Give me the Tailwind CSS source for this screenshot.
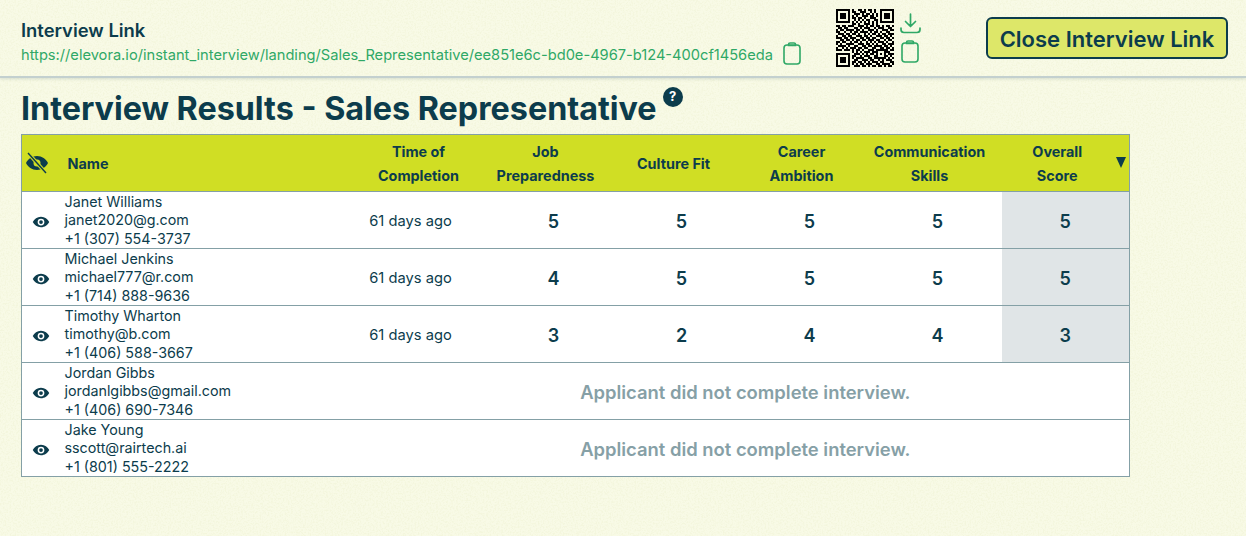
<!DOCTYPE html>
<html lang="en">
<head>
<meta charset="utf-8">
<title>Interview Results</title>
<script src="https://cdn.jsdelivr.net/npm/@tailwindcss/browser@4"></script>
</head>
<body class="relative h-[536px] w-[1246px] overflow-hidden bg-[#f8fae6] font-['Inter','Liberation_Sans',sans-serif] text-[#0c3c4c]">
<svg class="absolute inset-0 h-full w-full" aria-hidden="true"><filter id="n"><feTurbulence type="fractalNoise" baseFrequency="0.6" numOctaves="3" seed="4"/><feColorMatrix values="0 0 0 0 0.90  0 0 0 0 0.92  0 0 0 0 0.72  3.2 0 0 0 -1.35"/></filter><rect width="100%" height="100%" filter="url(#n)"/></svg>

<div class="relative">
<header class="flex h-[78px] items-center border-b-2 border-[#c3d0cf] pl-[21px] shadow-[0_1px_3px_rgba(12,60,76,0.15)]">
  <div class="mt-[7px] w-[815px] shrink-0">
    <div class="text-[18.4px] leading-6 font-semibold">Interview Link</div>
    <div class="mt-[3px] flex items-center gap-[10px]">
      <span class="text-[14.65px] leading-5 text-[#2fa866]">https://elevora.io/instant_interview/landing/Sales_Representative/ee851e6c-bd0e-4967-b124-400cf1456eda</span>
      <svg class="-mt-[4px] h-[23px] w-[18px]" viewBox="0 0 18 23" fill="none" stroke="#2fa866" stroke-width="1.6"><rect x="1" y="3" width="16" height="19" rx="3"/><path d="M5.5 3.5V2.5a1.5 1.5 0 0 1 1.5-1.5h4a1.5 1.5 0 0 1 1.5 1.5v1z"/></svg>
    </div>
  </div>
  <svg id="qr" class="h-[58px] w-[58px] shrink-0" viewBox="0 0 29 29" shape-rendering="crispEdges"></svg>
  <div class="ml-[5px] flex w-[22px] shrink-0 flex-col items-center gap-[6px]">
    <svg class="h-[21px] w-[21px]" viewBox="0 0 21 21" fill="none" stroke="#2fa866" stroke-width="1.7" stroke-linecap="round" stroke-linejoin="round"><path d="M10.5 1v12M5.5 8.5l5 5 5-5M1 15v1.5a3 3 0 0 0 3 3h13a3 3 0 0 0 3-3V15"/></svg>
    <svg class="h-[23px] w-[18px]" viewBox="0 0 18 23" fill="none" stroke="#2fa866" stroke-width="1.6"><rect x="1" y="3" width="16" height="19" rx="3"/><path d="M5.5 3.5V2.5a1.5 1.5 0 0 1 1.5-1.5h4a1.5 1.5 0 0 1 1.5 1.5v1z"/></svg>
  </div>
  <button class="ml-[65px] flex h-[42px] w-[242px] items-center justify-center rounded-md border-2 border-[#0c3c4c] bg-[#dde769] pt-[3px] text-[22px] font-semibold">Close Interview Link</button>
</header>

<main class="pl-[21px]">
  <div class="flex h-[56px] items-start">
    <h1 class="mt-[11px] text-[32.3px] leading-10 font-bold">Interview Results - Sales Representative</h1>
    <span class="mt-[9px] ml-[6px] flex h-5 w-5 items-center justify-center rounded-full bg-[#0c3c4c] text-[13px] font-bold text-white">?</span>
  </div>
  <table class="w-[1108px] table-fixed border-collapse border border-[#84a0a6] bg-white">
    <colgroup><col class="w-[39px]"><col class="w-[301px]"><col class="w-[128px]"><col class="w-[128px]"><col class="w-[128px]"><col class="w-[128px]"><col class="w-[128px]"><col class="w-[128px]"></colgroup>
    <thead>
      <tr class="h-[57px] bg-[#d0de24] text-[14.4px] leading-6 font-semibold">
        <th class="p-0 pb-[1px]"><svg class="ml-[3px] block h-[24px] w-[24px]" viewBox="0 0 24 24" fill="#0c3c4c"><path d="M12 5c5 0 9 3 11 7-2 4-6 7-11 7S3 16 1 12c2-4 6-7 11-7zm0 3.5a3.5 3.5 0 1 0 0 7 3.5 3.5 0 0 0 0-7z"/><path d="M3 2l18 20" stroke="#d0de24" stroke-width="3.5"/><path d="M3 2l18 20" stroke="#0c3c4c" stroke-width="1.4"/></svg></th>
        <th class="p-0 pt-[2px] pl-[7px] text-left">Name</th>
        <th class="p-0 pt-[2px] pr-[14px]">Time of<br>Completion</th>
        <th class="p-0 pt-[2px] pr-[16px]">Job<br>Preparedness</th>
        <th class="p-0 pt-[2px] pr-[16px]">Culture Fit</th>
        <th class="p-0 pt-[2px] pr-[16px]">Career<br>Ambition</th>
        <th class="p-0 pt-[2px] pr-[16px]">Communication<br>Skills</th>
        <th class="relative p-0 pt-[2px] pr-[16px]">Overall<br>Score<span class="absolute top-[22px] right-[3px] h-0 w-0 border-x-[5.5px] border-t-[11px] border-x-transparent border-t-[#0c3c4c]"></span></th>
      </tr>
    </thead>
    <tbody class="text-[14.3px] leading-[18.2px]">
      <tr class="h-[57px] border-t border-[#84a0a6]">
        <td class="p-0 pt-[4px]"><svg class="ml-[10px] block h-[18px] w-[18px]" viewBox="0 0 24 24" fill="#0c3c4c"><path d="M12 5c5 0 9 3 11 7-2 4-6 7-11 7S3 16 1 12c2-4 6-7 11-7zm0 2.5a4.5 4.5 0 1 0 0 9 4.5 4.5 0 0 0 0-9zm0 2a2.5 2.5 0 1 1 0 5 2.5 2.5 0 0 1 0-5z"/></svg></td>
        <td class="p-0 pt-[1px] pl-[4px]">Janet Williams<br>janet2020@g.com<br>+1 (307) 554-3737</td>
        <td class="p-0 pt-[2px] pr-[30px] text-center text-[14.7px]">61 days ago</td>
        <td class="p-0 pt-[4px] text-center text-[18px] font-semibold">5</td><td class="p-0 pt-[4px] text-center text-[18px] font-semibold">5</td><td class="p-0 pt-[4px] text-center text-[18px] font-semibold">5</td><td class="p-0 pt-[4px] text-center text-[18px] font-semibold">5</td>
        <td class="bg-[#e0e5e7] p-0 pt-[4px] text-center text-[18px] font-semibold">5</td>
      </tr>
      <tr class="h-[57px] border-t border-[#84a0a6]">
        <td class="p-0 pt-[4px]"><svg class="ml-[10px] block h-[18px] w-[18px]" viewBox="0 0 24 24" fill="#0c3c4c"><path d="M12 5c5 0 9 3 11 7-2 4-6 7-11 7S3 16 1 12c2-4 6-7 11-7zm0 2.5a4.5 4.5 0 1 0 0 9 4.5 4.5 0 0 0 0-9zm0 2a2.5 2.5 0 1 1 0 5 2.5 2.5 0 0 1 0-5z"/></svg></td>
        <td class="p-0 pt-[1px] pl-[4px]">Michael Jenkins<br>michael777@r.com<br>+1 (714) 888-9636</td>
        <td class="p-0 pt-[2px] pr-[30px] text-center text-[14.7px]">61 days ago</td>
        <td class="p-0 pt-[4px] text-center text-[18px] font-semibold">4</td><td class="p-0 pt-[4px] text-center text-[18px] font-semibold">5</td><td class="p-0 pt-[4px] text-center text-[18px] font-semibold">5</td><td class="p-0 pt-[4px] text-center text-[18px] font-semibold">5</td>
        <td class="bg-[#e0e5e7] p-0 pt-[4px] text-center text-[18px] font-semibold">5</td>
      </tr>
      <tr class="h-[57px] border-t border-[#84a0a6]">
        <td class="p-0 pt-[4px]"><svg class="ml-[10px] block h-[18px] w-[18px]" viewBox="0 0 24 24" fill="#0c3c4c"><path d="M12 5c5 0 9 3 11 7-2 4-6 7-11 7S3 16 1 12c2-4 6-7 11-7zm0 2.5a4.5 4.5 0 1 0 0 9 4.5 4.5 0 0 0 0-9zm0 2a2.5 2.5 0 1 1 0 5 2.5 2.5 0 0 1 0-5z"/></svg></td>
        <td class="p-0 pt-[1px] pl-[4px]">Timothy Wharton<br>timothy@b.com<br>+1 (406) 588-3667</td>
        <td class="p-0 pt-[2px] pr-[30px] text-center text-[14.7px]">61 days ago</td>
        <td class="p-0 pt-[4px] text-center text-[18px] font-semibold">3</td><td class="p-0 pt-[4px] text-center text-[18px] font-semibold">2</td><td class="p-0 pt-[4px] text-center text-[18px] font-semibold">4</td><td class="p-0 pt-[4px] text-center text-[18px] font-semibold">4</td>
        <td class="bg-[#e0e5e7] p-0 pt-[4px] text-center text-[18px] font-semibold">3</td>
      </tr>
      <tr class="h-[57px] border-t border-[#84a0a6]">
        <td class="p-0 pt-[4px]"><svg class="ml-[10px] block h-[18px] w-[18px]" viewBox="0 0 24 24" fill="#0c3c4c"><path d="M12 5c5 0 9 3 11 7-2 4-6 7-11 7S3 16 1 12c2-4 6-7 11-7zm0 2.5a4.5 4.5 0 1 0 0 9 4.5 4.5 0 0 0 0-9zm0 2a2.5 2.5 0 1 1 0 5 2.5 2.5 0 0 1 0-5z"/></svg></td>
        <td class="p-0 pt-[1px] pl-[4px]">Jordan Gibbs<br>jordanlgibbs@gmail.com<br>+1 (406) 690-7346</td>
        <td colspan="6" class="p-0 pt-[3px] text-center text-[18.4px] font-semibold text-[#86a0a6]">Applicant did not complete interview.</td>
      </tr>
      <tr class="h-[57px] border-t border-[#84a0a6]">
        <td class="p-0 pt-[4px]"><svg class="ml-[10px] block h-[18px] w-[18px]" viewBox="0 0 24 24" fill="#0c3c4c"><path d="M12 5c5 0 9 3 11 7-2 4-6 7-11 7S3 16 1 12c2-4 6-7 11-7zm0 2.5a4.5 4.5 0 1 0 0 9 4.5 4.5 0 0 0 0-9zm0 2a2.5 2.5 0 1 1 0 5 2.5 2.5 0 0 1 0-5z"/></svg></td>
        <td class="p-0 pt-[1px] pl-[4px]">Jake Young<br>sscott@rairtech.ai<br>+1 (801) 555-2222</td>
        <td colspan="6" class="p-0 pt-[3px] text-center text-[18.4px] font-semibold text-[#86a0a6]">Applicant did not complete interview.</td>
      </tr>
    </tbody>
  </table>
</main>
</div>
<script>
var rows=["11111110100110101101001111111","10000010110011100101001000001","10111010011101011010101011101","10111010101001110110101011101","10111010110110100111001011101","10000010010101011001101000001","11111110101010101010101111111","00000000110100111010100000000","11011011100111010110110101101","01101100011010111001011100110","10110111101101001110100111011","11001001011011110101101001100","01110110110100101011010110111","10011011001110110100111011010","11101101110011011011001101101","00110110101101101110110010110","11011001011010010101011101001","10100111100111011010100110111","01111010011001101101111011010","10010101110110110011001101101","11101110101101001110111111011","00000000101010111011100011100","11111110011101010110101010111","10000010110010111001100011010","10111010101111001101111110101","10111010011001110110010101110","10111010110110101011101100011","10000010101011011100110111101","11111110011101101011011010110"];
var d="";rows.forEach(function(r,y){for(var x=0;x<r.length;x++){if(r[x]=="1"){d+="M"+x+" "+y+"h1v1h-1z";}}});
document.getElementById("qr").innerHTML='<path fill="#000" d="'+d+'"/>';
</script>
</body>
</html>
